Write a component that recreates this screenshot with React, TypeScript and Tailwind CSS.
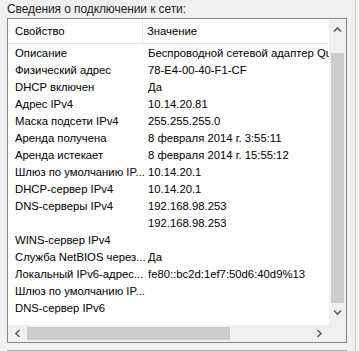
import React from 'react';

type Row = { name: string; value: string };

// labels are shown as the list control trims them
const rows: Row[] = [
  { name: 'Описание', value: 'Беспроводной сетевой адаптер Qu' },
  { name: 'Физический адрес', value: '78-E4-00-40-F1-CF' },
  { name: 'DHCP включен', value: 'Да' },
  { name: 'Адрес IPv4', value: '10.14.20.81' },
  { name: 'Маска подсети IPv4', value: '255.255.255.0' },
  { name: 'Аренда получена', value: '8 февраля 2014 г. 3:55:11' },
  { name: 'Аренда истекает', value: '8 февраля 2014 г. 15:55:12' },
  { name: 'Шлюз по умолчанию IP...', value: '10.14.20.1' },
  { name: 'DHCP-сервер IPv4', value: '10.14.20.1' },
  { name: 'DNS-серверы IPv4', value: '192.168.98.253' },
  { name: '', value: '192.168.98.253' },
  { name: 'WINS-сервер IPv4', value: '' },
  { name: 'Служба NetBIOS через...', value: 'Да' },
  { name: 'Локальный IPv6-адрес...', value: 'fe80::bc2d:1ef7:50d6:40d9%13' },
  { name: 'Шлюз по умолчанию IP...', value: '' },
  { name: 'DNS-сервер IPv6', value: '' },
];

const Chevron = ({ dir }: { dir: 'up' | 'down' | 'left' | 'right' }) => {
  const rot = { up: 0, right: 90, down: 180, left: 270 }[dir];
  return (
    <svg width="9" height="9" viewBox="0 0 9 9" style={{ transform: `rotate(${rot}deg)` }}>
      <path d="M1 6.5 L4.5 3 L8 6.5" fill="none" stroke="#606060" strokeWidth="1.6" />
    </svg>
  );
};

const App: React.FC = () => {
  return (
    <div
      className="w-[359px] h-[351px] bg-[#f0f0f0] flex overflow-hidden text-[11.3px] text-black"
      style={{ fontFamily: '"Liberation Sans", Arial, sans-serif' }}
    >
      <div className="flex-1 flex flex-col pl-[7px] pr-[8px]">
        <div className="h-[18px] leading-[16px] pt-px text-[12px] tracking-[-0.1px] text-[#1e1e1e]">Сведения о подключении к сети:</div>

        <div className="h-[325px] border border-[#828790] bg-white grid grid-cols-[321px_17px] grid-rows-[306px_17px]">
          {/* list */}
          <div className="overflow-hidden">
            <div className="flex h-[25px] border-b border-[#e5e5e5] items-center">
              <div className="w-[135px] h-full border-r border-[#e5e5e5] pl-[7px] flex items-center">Свойство</div>
              <div className="pl-[4px] whitespace-nowrap">Значение</div>
            </div>
            <div className="pt-px">
              {rows.map((r, i) => (
                <div key={i} className="flex h-[17px] leading-[17px] whitespace-nowrap">
                  <div className="w-[135px] shrink-0 pl-[7px]">{r.name}</div>
                  <div className="pl-[5px]">{r.value}</div>
                </div>
              ))}
            </div>
          </div>

          {/* vertical scrollbar */}
          <div className="bg-[#f0f0f0] flex flex-col items-center">
            <div className="h-[17px] w-full flex items-center justify-center mt-[2px]">
              <Chevron dir="up" />
            </div>
            <div className="mt-[15px] w-[13px] h-[250px] bg-[#cdcdcd]" />
            <div className="h-[17px] w-full flex items-center justify-center mt-[1px]">
              <Chevron dir="down" />
            </div>
          </div>

          {/* horizontal scrollbar */}
          <div className="bg-[#f0f0f0] flex items-center">
            <div className="w-[17px] h-full flex items-center justify-center ml-[1px]">
              <Chevron dir="left" />
            </div>
            <div className="w-[203px] h-[13px] bg-[#cdcdcd] ml-[1px]" />
            <div className="flex-1" />
            <div className="w-[17px] h-full flex items-center justify-center mr-[1px]">
              <Chevron dir="right" />
            </div>
          </div>
          <div className="bg-[#f0f0f0]" />
        </div>

        <div className="mt-[7px] border-t border-[#adadad] h-px" />
      </div>

      <div className="w-[1px] bg-[#b4cbe6]" />
      <div className="w-[3px] bg-[#f4f4f4]" />
    </div>
  );
};

export default App;
